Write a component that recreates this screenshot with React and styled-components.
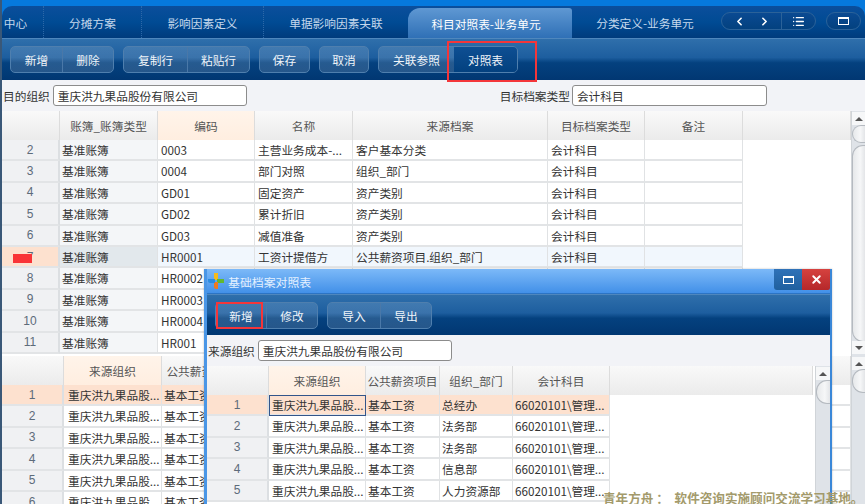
import React from 'react';
import styled, { createGlobalStyle } from 'styled-components';
import { ChevronLeft, ChevronRight, List, X } from 'lucide-react';

const Global = createGlobalStyle`
  * { box-sizing: border-box; }
  html, body { margin: 0; padding: 0; overflow: hidden; background: #fff; }
  body { font-family: "Noto Sans CJK SC", "Liberation Sans", sans-serif; font-size: 11.7px; color: #3a3a3a; }
`;

const Screen = styled.div`
  position: relative; width: 865px; height: 504px; overflow: hidden;
  display: flex; flex-direction: column; background: #fff;
  border-left: 2px solid #3a5878;
`;
const TabBar = styled.div`
  height: 38px; flex: none; padding-top: 6px; background: #0679dd;
`;
const TabStrip = styled.div`
  height: 32px; display: flex; align-items: stretch; border-radius: 10px 10px 0 0;
  background: linear-gradient(#0b4e9c, #004b94 50%, #003b7c);
`;
const Tab = styled.div`
  width: ${p => p.$w}px; flex: none; display: flex; align-items: center; justify-content: center;
  margin-top: ${p => (p.$active ? 2 : 0)}px;
  padding-right: ${p => p.$pr || 0}px;
  color: ${p => (p.$active ? '#fff' : '#c5d8ec')};
  background: ${p => (p.$active ? 'linear-gradient(#5f98d3, #2f70b6)' : 'none')};
  border-radius: ${p => (p.$active ? '12px 3px 0 0' : '0')};
  border-right: ${p => (p.$div ? '1px dotted #2d68a8' : 'none')};
`;
const Pills = styled.div`
  display: flex; align-items: center; margin-left: 3px;
`;
const Pill = styled.div`
  display: flex; align-items: center; height: 18px; width: ${p => p.$w}px; margin-right: ${p => p.$mr || 0}px;
  margin-top: -2px; border: 1px solid #2b6299; border-radius: 9px; background: linear-gradient(#0a4a92, #03417f); color: #fff;
`;
const PillPart = styled.div`
  display: flex; align-items: center; justify-content: center; height: 100%; width: ${p => p.$w}px;
  border-right: ${p => (p.$div ? '1px solid #2b6299' : 'none')};
`;
const WinIcon = styled.span`
  display: block; width: 11px; height: 8px; border: 1.5px solid #fff; border-top-width: 2.5px;
`;
const Toolbar = styled.div`
  height: ${p => p.$h}px; flex: none; display: flex; align-items: center; gap: 9px;
  padding: 0 0 0 ${p => p.$pl}px;
  background: linear-gradient(#2f6fab 0, #1d5e9f 45%, #04417f 58%, #013772 100%);
  border-top: 1px solid #4f87bd;
`;
const BtnGroup = styled.div`
  display: flex; height: 27px; border: 1px solid #4f7fae; border-radius: 5px; overflow: hidden;
  background: linear-gradient(rgba(255,255,255,.12), rgba(255,255,255,.14));
`;
const Btn = styled.div`
  width: ${p => p.$w}px; display: flex; align-items: center; justify-content: center; color: #f0f5fa;
  border-left: ${p => (p.$split ? '1px solid #4a78a8' : 'none')};
  background: ${p => (p.$on ? 'linear-gradient(#0e4f93, #03417f)' : 'none')};
`;
const FilterBar = styled.div`
  height: 31px; flex: none; display: flex; align-items: center; background: #f2f3f7; padding-left: ${p => p.$pl}px;
  color: #333;
`;
const Field = styled.div`
  width: ${p => p.$w}px; height: 21px; margin-left: ${p => p.$ml}px; margin-right: ${p => p.$mr || 0}px;
  background: #fff; border: 1px solid #8c8c8c; border-radius: 3px; padding-left: 4px; display: flex; align-items: center; color: #333;
`;
const Panel = styled.div`
  display: flex; flex: none; height: ${p => p.$h}px; background: #fff; overflow: hidden;
`;
const GridArea = styled.div`
  flex: 1; min-width: 0; overflow: hidden; padding-right: ${p => p.$pr || 0}px;
`;
const GridRow = styled.div`
  display: grid; grid-template-columns: ${p => p.$cols}; height: ${p => p.$h}px;
`;
const Head = styled.div`
  display: flex; align-items: center; justify-content: center; color: #555; white-space: nowrap; overflow: hidden;
  background: ${p => (p.$peach ? 'linear-gradient(#fff4ea, #ffeee0)' : 'linear-gradient(#f9f9f9, #ebebeb)')};
  border-right: 1px solid #dcdcdc;
`;
const NumCell = styled.div`
  position: relative; display: flex; align-items: center; justify-content: center; color: #5d6b7a; font-family: "Liberation Sans", sans-serif; font-size: 12px;
  background: ${p => (p.$on ? '#fde1cf' : '#f0f1f3')};
  border-right: 2px solid #dcdfe2; border-bottom: 2px solid #e2e4e6;
`;
const Cell = styled.div`
  display: block; line-height: 19px; padding-left: ${p => p.$pl ?? 3}px; white-space: nowrap; overflow: hidden;
  color: #333; font-size: 11.7px;
  background: ${p => p.$bg || '#fff'};
  border-right: 1px solid #e0e2e4; border-bottom: 2px solid #e2e4e6;
  outline: ${p => (p.$focus ? '1px solid #33558a' : 'none')}; outline-offset: -1px;
`;
const RedTag = styled.div`
  position: absolute; left: 11px; top: 7px; width: 19px; height: 9px; background: #f93437;
`;
const Track = styled.div`
  flex: none; width: ${p => p.$w}px; position: relative; background: #dfe3e8; border-left: 1px solid #d0d4d8;
`;
const Arrow = styled.div`
  position: absolute; left: 0; width: 100%; height: 13px; display: flex; align-items: center; justify-content: center;
  background: #f6f7f8;
  ${p => (p.$bottom ? `bottom: ${p.$bottom}px;` : 'top: 1px;')}
`;
const Thumb = styled.div`
  position: absolute; left: 0; right: 0; top: ${p => p.$top}px; height: ${p => p.$h}px;
  background: linear-gradient(90deg, #e6e8ea, #f6f7f8 60%, #e3e5e8);
  border: 1px solid #b5bac0; border-right: none; border-radius: 11px 0 0 11px;
`;
const Wedge = styled.span`
  width: 0; height: 0; border-left: 4px solid transparent; border-right: 4px solid transparent;
  ${p => (p.$down ? 'border-top: 4px solid #555;' : 'border-bottom: 4px solid #555;')}
`;
const RedBox = styled.div`
  position: absolute; left: ${p => p.$x}px; top: ${p => p.$y}px; width: ${p => p.$w}px; height: ${p => p.$h}px;
  border: 2.5px solid #f4363a; pointer-events: none; z-index: 5;
`;
const Modal = styled.div`
  position: absolute; left: 202px; top: 269px; width: 628px; height: 235px; display: flex; flex-direction: column;
  border-left: 3px solid #4a96e6; border-right: 2px solid #3a87d8; background: #fff; overflow: hidden;
  box-shadow: 0 0 2px rgba(0,0,0,.25);
`;
const TitleBar = styled.div`
  height: 25px; flex: none; display: flex; align-items: center; padding-left: 1px; gap: 4px; color: #e3f0ff;
  background: linear-gradient(#7cb9f8, #4290e8); border-bottom: 1px solid #2c74c4;
`;
const TitleText = styled.span`
  font-size: 11.9px; flex: 1;
`;
const WinBtn = styled.div`
  width: 28px; height: 21px; align-self: flex-start; display: flex; align-items: center; justify-content: center; color: #fff;
  margin-left: ${p => (p.$close ? -4 : 0)}px;
  background: ${p => (p.$close ? 'linear-gradient(#d6423f, #b5282a)' : 'linear-gradient(#2f72b8, #20609f)')};
  border-radius: 0 0 ${p => (p.$close ? '2px 0' : '0 3px')};
`;
const Watermark = styled.div`
  position: absolute; left: 601px; top: 488px; color: #a39a6b; font-weight: 700; font-size: 12.6px; white-space: pre; z-index: 6;
`;

const mainCols = '58px 98px 97px 98px 195px 97px 98px 1fr';
const mainRowCols = '58px 98px 97px 98px 195px 97px 98px';
const lowerCols = '62px 98px 80px 80px 80px 1fr';
const modalCols = '62px 97px 74px 73px 97px 1fr';
const modalRowCols = '62px 97px 74px 73px 97px';
const mainHead = ['', '账簿_账簿类型', '编码', '名称', '来源档案', '目标档案类型', '备注', ''];
const accRows = [
  ['2', '0003', '主营业务成本-...', '客户基本分类', '会计科目'],
  ['3', '0004', '部门对照', '组织_部门', '会计科目'],
  ['4', 'GD01', '固定资产', '资产类别', '会计科目'],
  ['5', 'GD02', '累计折旧', '资产类别', '会计科目'],
  ['6', 'GD03', '减值准备', '资产类别', '会计科目'],
  ['7', 'HR0001', '工资计提借方', '公共薪资项目.组织_部门', '会计科目'],
  ['8', 'HR0002', '', '', ''],
  ['9', 'HR0003', '', '', ''],
  ['10', 'HR0004', '', '', ''],
  ['11', 'HR001', '', '', ''],
];
const ORG = '重庆洪九果品股份有限公司';
const ORG_SHORT = '重庆洪九果品股...';
const depts = ['总经办', '法务部', '法务部', '信息部', '人力资源部'];

function Scroll({ w, thumbTop, thumbH, topPiece, bottomArrow }) {
  return (
    <Track $w={w}>
      <Arrow><Wedge /></Arrow>
      {topPiece ? <Thumb $top={14} $h={topPiece} /> : null}
      <Thumb $top={thumbTop} $h={thumbH} />
      {bottomArrow ? <Arrow $bottom={bottomArrow}><Wedge $down /></Arrow> : null}
    </Track>
  );
}

export default function App() {
  return (
    <Screen>
      <Global />
      <TabBar>
        <TabStrip>
          <Tab $w={42} $div $pr={14}>中心</Tab>
          <Tab $w={98} $div>分摊方案</Tab>
          <Tab $w={122} $div>影响因素定义</Tab>
          <Tab $w={144}>单据影响因素关联</Tab>
          <Tab $w={164} $active $pr={8}>科目对照表-业务单元</Tab>
          <Tab $w={146}>分类定义-业务单元</Tab>
          <Pills>
            <Pill $w={95} $mr={10}>
              <PillPart $w={60} $div>
                <ChevronLeft size={13} strokeWidth={3} style={{ marginRight: 9 }} />
                <ChevronRight size={13} strokeWidth={3} style={{ marginLeft: 3 }} />
              </PillPart>
              <PillPart $w={33}><List size={13} strokeWidth={2.4} /></PillPart>
            </Pill>
            <Pill $w={35}><PillPart $w={33}><WinIcon /></PillPart></Pill>
          </Pills>
        </TabStrip>
      </TabBar>
      <Toolbar $h={42} $pl={8}>
        <BtnGroup><Btn $w={51}>新增</Btn><Btn $w={51} $split>删除</Btn></BtnGroup>
        <BtnGroup><Btn $w={63}>复制行</Btn><Btn $w={62} $split>粘贴行</Btn></BtnGroup>
        <BtnGroup><Btn $w={49}>保存</Btn></BtnGroup>
        <BtnGroup><Btn $w={48}>取消</Btn></BtnGroup>
        <BtnGroup>
          <Btn $w={75}>关联参照</Btn>
          <Btn $w={63} $on>对照表</Btn>
        </BtnGroup>
      </Toolbar>
      <FilterBar $pl={1}>
        目的组织
        <Field $w={194} $ml={3} $mr={253}>{ORG}</Field>
        目标档案类型
        <Field $w={195} $ml={2}>会计科目</Field>
      </FilterBar>
      <Panel $h={245}>
        <GridArea>
          <GridRow $cols={mainCols} $h={29}>
            {mainHead.map((h, i) => <Head key={i} $peach={i === 2}>{h}</Head>)}
          </GridRow>
          {accRows.map(r => {
            const on = r[0] === '7';
            const bg = on ? '#f1f7fd' : '#fff';
            return (
              <GridRow key={r[0]} $cols={mainRowCols} $h={21.4}>
                <NumCell $on={on}>{r[0]}{on && <RedTag />}</NumCell>
                <Cell $bg={on ? '#e2e8ec' : '#f4f6f8'} $pl={2}>基准账簿</Cell>
                <Cell $bg={bg}>{r[1]}</Cell>
                <Cell $bg={bg}>{r[2]}</Cell>
                <Cell $bg={bg}>{r[3]}</Cell>
                <Cell $bg={bg}>{r[4]}</Cell>
                <Cell $bg={bg} />
              </GridRow>
            );
          })}
        </GridArea>
        <Scroll w={14} topPiece={18} thumbTop={34} thumbH={197} bottomArrow={2} />
      </Panel>
      <Panel $h={148}>
        <GridArea>
          <GridRow $cols={lowerCols} $h={29}>
            <Head /><Head $peach>来源组织</Head><Head>公共薪资项目</Head><Head /><Head /><Head />
          </GridRow>
          {[1, 2, 3, 4, 5, 6].map(n => {
            const bg = n === 1 ? '#fde1cf' : '#fff';
            return (
              <GridRow key={n} $cols={lowerCols} $h={21.4}>
                <NumCell $on={n === 1}>{n}</NumCell>
                <Cell $bg={bg} $pl={4}>{ORG_SHORT}</Cell>
                <Cell $bg={bg} $pl={2}>基本工资</Cell>
                <Cell $bg={bg} /><Cell $bg={bg} /><Cell $bg="#fff" />
              </GridRow>
            );
          })}
        </GridArea>
        <Scroll w={14} thumbTop={13} thumbH={24} />
      </Panel>

      <RedBox $x={445} $y={41} $w={90} $h={41} />

      <Modal>
        <TitleBar>
          <svg width="16" height="16" viewBox="0 0 16 16">
            <path d="M6 0h4v7H6z" fill="#f5bb1c" />
            <path d="M9 6h7v4H9z" fill="#62b82f" />
            <path d="M6 9h4v7H8c-1 0-2-1-2-2z" fill="#ef7a1f" />
            <path d="M0 6h7v4H2C1 10 0 9 0 8z" fill="#2a8ce2" />
          </svg>
          <TitleText>基础档案对照表</TitleText>
          <WinBtn><WinIcon /></WinBtn>
          <WinBtn $close><X size={13} strokeWidth={3.6} /></WinBtn>
        </TitleBar>
        <Toolbar $h={41} $pl={8}>
          <BtnGroup><Btn $w={50}>新增</Btn><Btn $w={51} $split>修改</Btn></BtnGroup>
          <BtnGroup><Btn $w={52}>导入</Btn><Btn $w={51} $split>导出</Btn></BtnGroup>
        </Toolbar>
        <FilterBar $pl={1}>
          来源组织
          <Field $w={194} $ml={3}>{ORG}</Field>
        </FilterBar>
        <Panel $h={138}>
          <GridArea $pr={2}>
            <GridRow $cols={modalCols} $h={29}>
              <Head /><Head $peach>来源组织</Head><Head>公共薪资项目</Head><Head>组织_部门</Head><Head>会计科目</Head><Head />
            </GridRow>
            {depts.map((d, i) => {
              const bg = i === 0 ? '#fde1cf' : '#fff';
              return (
                <GridRow key={i} $cols={modalRowCols} $h={21.4}>
                  <NumCell $on={i === 0}>{i + 1}</NumCell>
                  <Cell $bg={bg} $focus={i === 0}>{ORG_SHORT}</Cell>
                  <Cell $bg={bg} $pl={2}>基本工资</Cell>
                  <Cell $bg={bg} $pl={2}>{d}</Cell>
                  <Cell $bg={bg} $pl={2}>66020101\管理...</Cell>
                </GridRow>
              );
            })}
          </GridArea>
          <Scroll w={15} thumbTop={14} thumbH={24} />
        </Panel>
      </Modal>
      <RedBox $x={214} $y={302} $w={47} $h={27} />
      <Watermark>青年方舟 ：  软件咨询实施顾问交流学习基地。</Watermark>
    </Screen>
  );
}
